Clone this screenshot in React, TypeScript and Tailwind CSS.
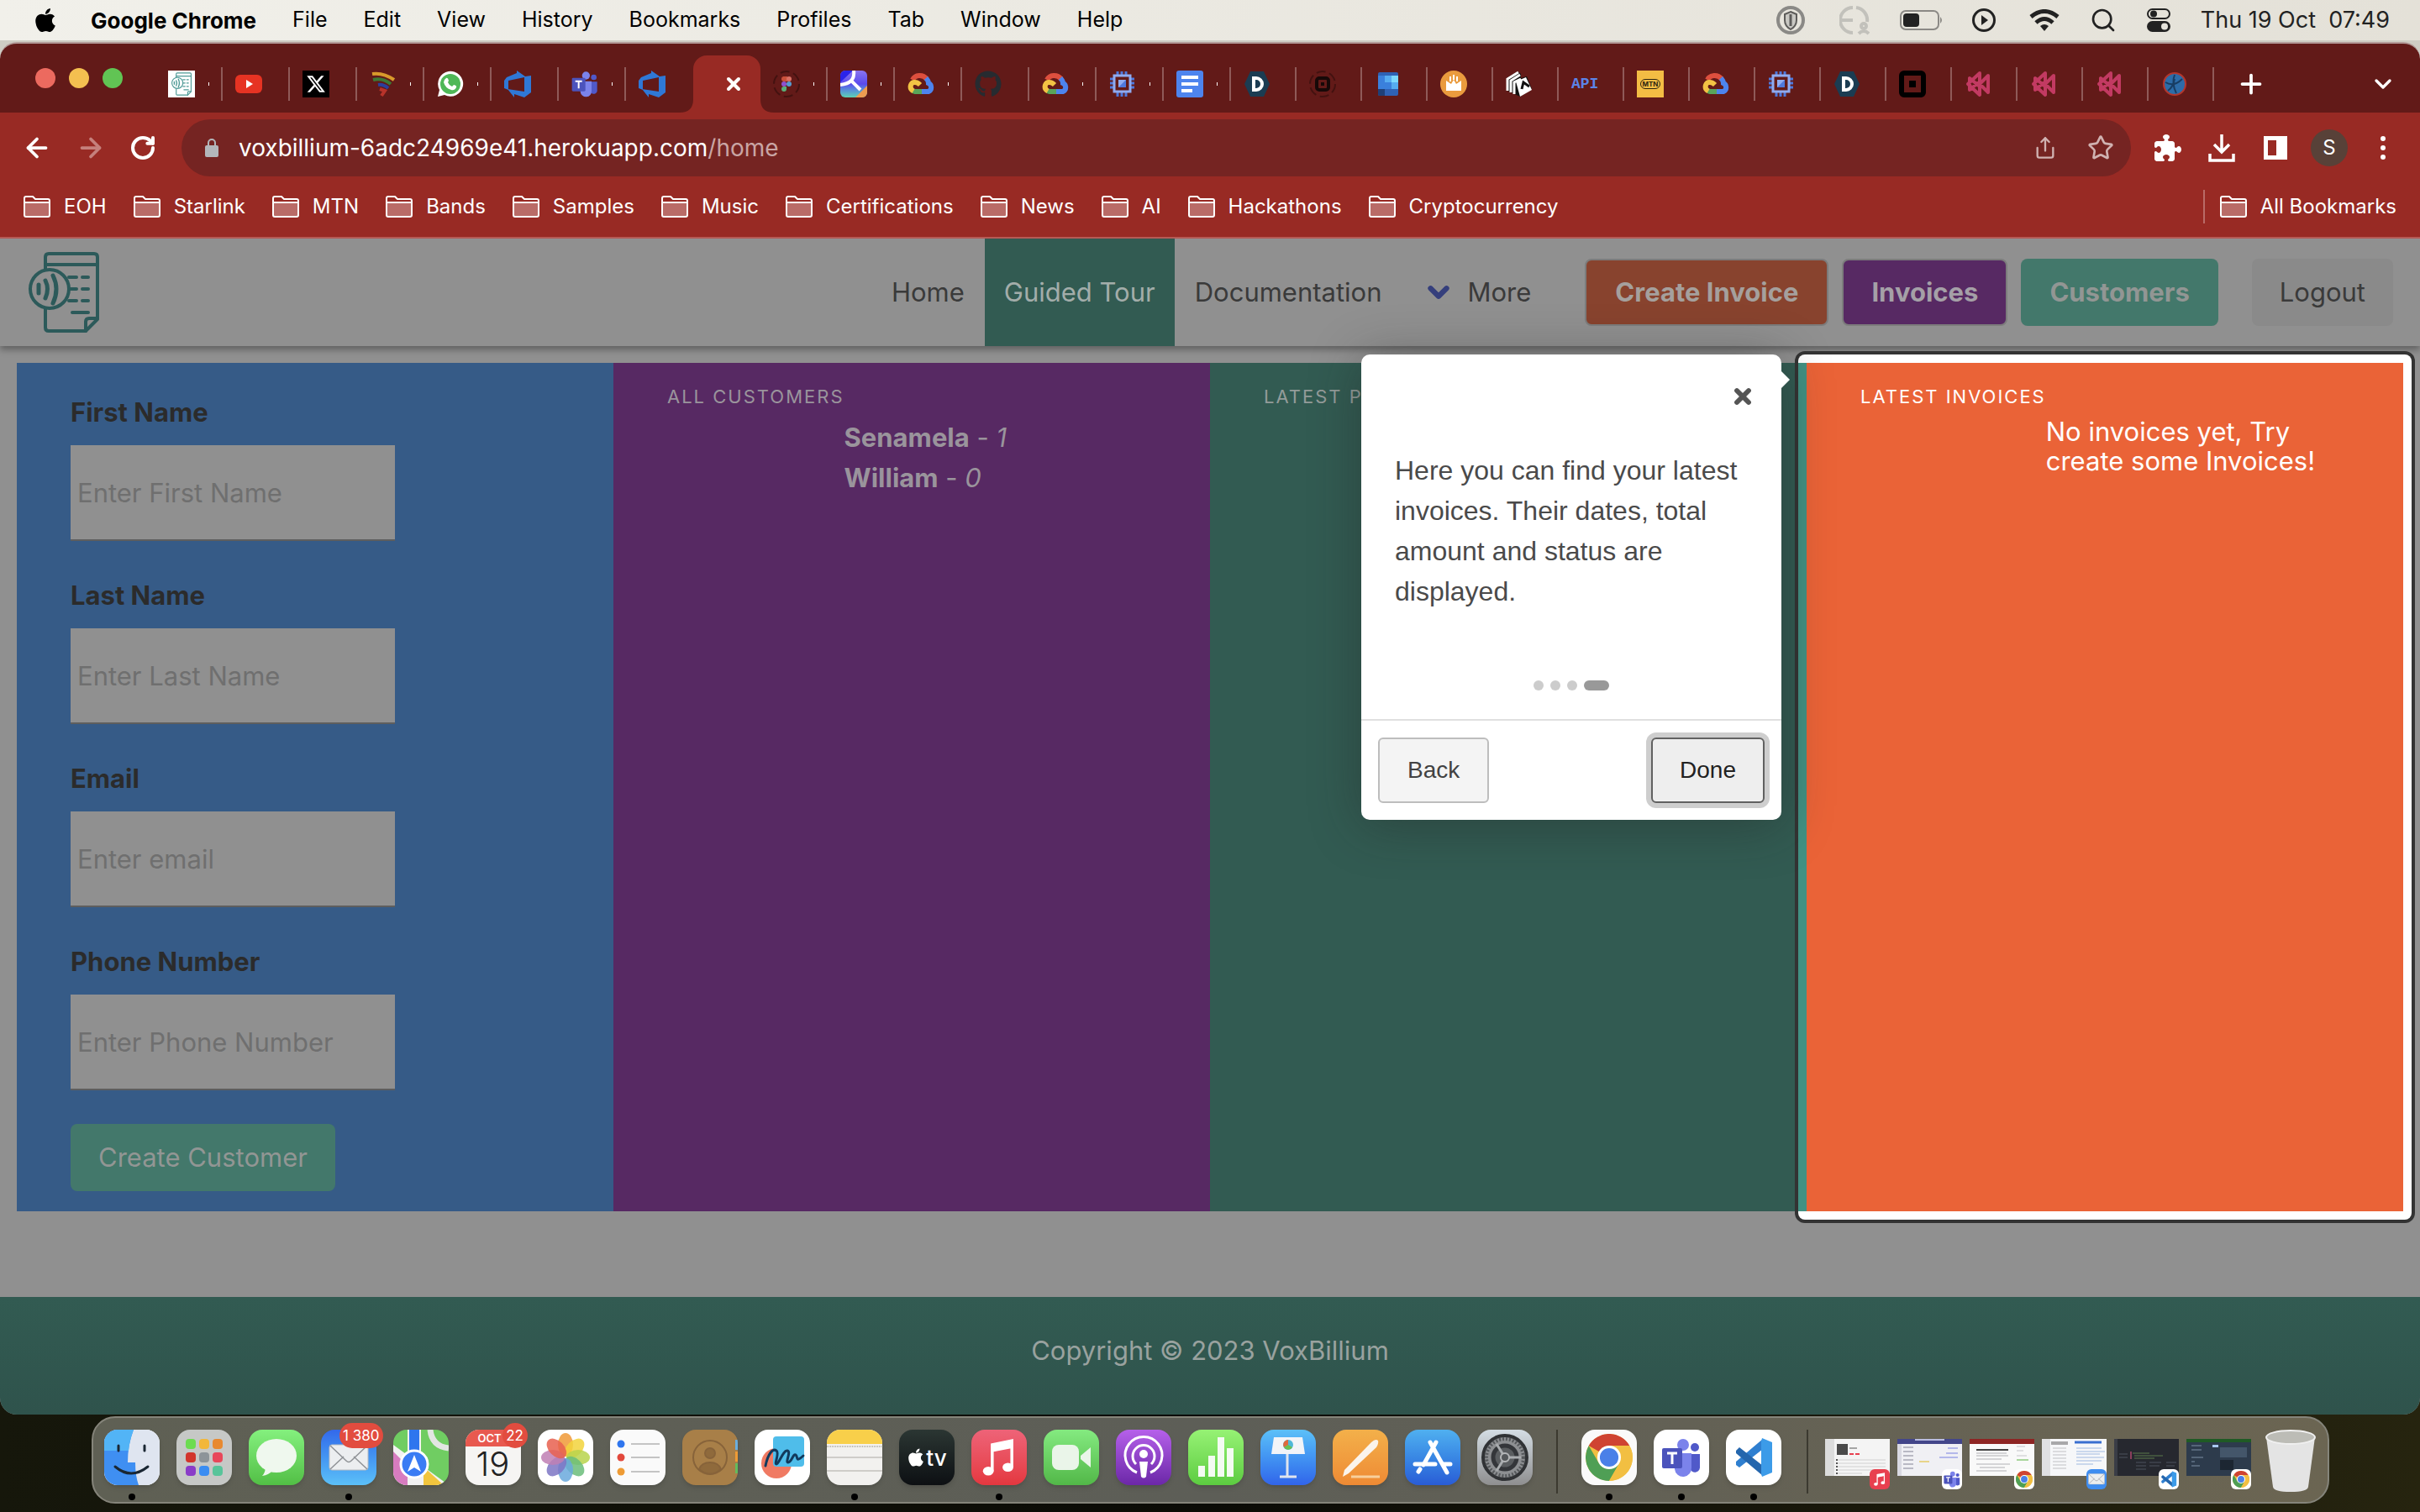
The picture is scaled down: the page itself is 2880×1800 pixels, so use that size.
import type { ReactNode } from 'react';
import clsx from 'clsx';
import { FaApple, FaGithub, FaPuzzlePiece, FaXTwitter } from 'react-icons/fa6';
import {
  ArrowLeft,
  ArrowRight,
  ChevronDown,
  Plus,
  RotateCw,
  Search,
  Share,
  Star,
  X,
} from 'lucide-react';

const menus = ['File', 'Edit', 'View', 'History', 'Bookmarks', 'Profiles', 'Tab', 'Window', 'Help'];

const bookmarks = [
  'EOH',
  'Starlink',
  'MTN',
  'Bands',
  'Samples',
  'Music',
  'Certifications',
  'News',
  'AI',
  'Hackathons',
  'Cryptocurrency',
];

const fields = [
  { id: 'firstName', label: 'First Name', placeholder: 'Enter First Name', type: 'text' },
  { id: 'lastName', label: 'Last Name', placeholder: 'Enter Last Name', type: 'text' },
  { id: 'email', label: 'Email', placeholder: 'Enter email', type: 'email' },
  { id: 'phone', label: 'Phone Number', placeholder: 'Enter Phone Number', type: 'tel' },
];

/* ---------- shared drawings ---------- */

function VoxLogo({ className, stroke }: { className: string; stroke: string }) {
  return (
    <svg viewBox="0 0 84 96" className={className} fill="none" stroke={stroke} strokeWidth="4" strokeLinecap="round" strokeLinejoin="round">
      <path d="M20 20V6q0-4 4-4h54q4 0 4 4v74L68 94H24q-4 0-4-4V68" />
      <path d="M20 15h62" />
      <path d="M82 79H72q-4 0-4 4v11" />
      <circle cx="25" cy="44" r="23" />
      <path d="M12 39v10" strokeWidth="5" />
      <path d="M20 34q5 10 0 21M29 28q8 16 0 33" strokeWidth="5" />
      <path d="M48 30h9M64 30h7M50 44h7M64 44h7M48 58h9M64 58h7M52 72h19" />
    </svg>
  );
}

function CloudLogo() {
  return (
    <svg viewBox="0 0 32 32" className="size-8" fill="none" strokeWidth="6">
      <path d="M6 11C9 5 18 4 23 10" stroke="#dd4f3e" />
      <path d="M22 9q3 3 3 6a5.500 5.500 0 0 1 0 10h-9" stroke="#4d84ee" />
      <path d="M17 25H9l-3-1" stroke="#59a55a" />
      <path d="M7 24.500C1 21 4 13 9 14q3 0 6 3" stroke="#f3c344" />
    </svg>
  );
}

function ChipLogo() {
  return (
    <svg viewBox="0 0 32 32" className="size-8" fill="none">
      <path d="M10 1v5M15 1v5M20 1v5M10 26v5M15 26v5M20 26v5M1 10h5M1 15h5M1 20h5M25 10h5M25 15h5M25 20h5" stroke="#4f78dc" strokeWidth="3" />
      <rect x="6" y="6" width="19" height="19" stroke="#8fabf0" strokeWidth="3" />
      <path d="M11 11h9v9h-9z" fill="#8fabf0" />
      <path d="M20 11v9h-9z" fill="#4f78dc" />
    </svg>
  );
}

function DevOpsLogo() {
  return (
    <svg viewBox="0 0 32 32" className="size-8" fill="#2f78d6">
      <path d="M0 12 3 8l12-5V0l10 7 7-1v20l-8 6-12-4v4L4 22l20 3V8L5 12v11l-5-2z" />
    </svg>
  );
}

function TeamsMark({ className }: { className: string }) {
  return (
    <svg viewBox="0 0 48 48" className={className}>
      <circle cx="26" cy="9" r="7" fill="#7b83eb" />
      <circle cx="40" cy="12" r="5" fill="#5059c9" />
      <path d="M34 20h12v14a6 6 0 0 1-12 3z" fill="#5059c9" />
      <path d="M16 19h20v17a10 10 0 0 1-20 2z" fill="#7b83eb" />
      <rect x="1" y="13" width="24" height="24" rx="2" fill="#4b53bc" />
      <path d="M7 19h12M13 19v13" stroke="#fff" strokeWidth="3" />
    </svg>
  );
}

function CodeMark({ className }: { className: string }) {
  return (
    <svg viewBox="0 0 48 48" className={className}>
      <path d="M35 2 3 29v4l4 3 28-22z" fill="#2f7fd0" />
      <path d="M3 16l4-4 28 22v12L3 19z" fill="#2466ad" />
      <path d="M34 1l12 5v36l-12 5-1-3V5z" fill="#3c9be8" />
    </svg>
  );
}

function ChromeMark({ className }: { className: string }) {
  return (
    <svg viewBox="0 0 48 48" className={className}>
      <circle cx="24" cy="24" r="24" fill="#f2bf42" />
      <path d="M24 24 3.200 12A24 24 0 0 1 44.800 12L24 12z" fill="#cf4332" />
      <path d="M3.200 12A24 24 0 0 0 24 48L34.400 30 24 24 13.600 30z" fill="#4f9f55" />
      <path d="M24 12h20.800A24 24 0 0 1 24 48l10.400-18z" fill="#f2bf42" />
      <circle cx="24" cy="24" r="12" fill="#fff" />
      <circle cx="24" cy="24" r="9.500" fill="#4a80e8" />
    </svg>
  );
}

function MusicMark({ className }: { className: string }) {
  return (
    <svg viewBox="0 0 48 48" className={className}>
      <path d="M17 38V11l20-4v27M17 17l20-4" fill="none" stroke="#fff" strokeWidth="3" />
      <path d="M17 11l20-4v7l-20 4z" fill="#fff" />
      <ellipse cx="13" cy="38" rx="5.500" ry="4.500" fill="#fff" />
      <ellipse cx="33" cy="34" rx="5.500" ry="4.500" fill="#fff" />
    </svg>
  );
}

function Envelope({ className }: { className: string }) {
  return (
    <svg viewBox="0 0 48 32" className={className}>
      <rect x="1" y="1" width="46" height="30" rx="3" fill="#eceef0" stroke="#b9bcc0" />
      <path d="M2 30 18 15M46 30 30 15M2 2l19 18q3 3 6 0L46 2" fill="none" stroke="#8f9296" strokeWidth="1.500" />
    </svg>
  );
}

/* ---------- tab strip ---------- */

function HexD() {
  return (
    <svg viewBox="0 0 32 32" className="size-8">
      <path d="M8 1h16l7 15-7 15H8L1 16z" fill="#1b3c52" />
      <path d="M12 9h3a7 7 0 0 1 0 14h-3z" fill="none" stroke="#fff" strokeWidth="4" />
    </svg>
  );
}

function PinkMark() {
  return (
    <svg viewBox="0 0 32 32" className="size-8" fill="none" stroke="#c23a62" strokeWidth="4" strokeLinejoin="round">
      <path d="M18 3 4 16l14 13V19L6 9v14l12-10zM18 16 28 6v20z" />
    </svg>
  );
}

function DashedRing({ children }: { children: ReactNode }) {
  return (
    <svg viewBox="0 0 32 32" className="size-8">
      <circle cx="16" cy="16" r="15" fill="none" stroke="#431210" strokeWidth="2" strokeDasharray="11 4.700" />
      {children}
    </svg>
  );
}

const firstTabs: ReactNode[] = [
  <div className="flex size-8 items-center justify-center bg-white">
    <VoxLogo className="h-7 w-6" stroke="#4f9a96" />
  </div>,
  <svg viewBox="0 0 32 32" className="size-8">
    <rect y="5" width="32" height="22" rx="6" fill="#e63323" />
    <path d="M13 11v10l8-5z" fill="#fff" />
  </svg>,
  <div className="flex size-8 items-center justify-center bg-black">
    <FaXTwitter className="size-6 text-white" />
  </div>,
  <svg viewBox="0 0 32 32" className="size-8" fill="none" strokeWidth="4">
    <path d="M3 4q13-2 26 7" stroke="#d99a2b" />
    <path d="M4 11q11-3 21 5" stroke="#3c7a35" />
    <path d="M10 17q6-1 12 4" stroke="#2b3f9c" />
    <path d="M12 22l6 2-4 6" stroke="#b8332a" />
  </svg>,
  <svg viewBox="0 0 32 32" className="size-8">
    <path d="M1 31l2-8a15 15 0 1 1 6 6z" fill="#fff" />
    <circle cx="16" cy="16" r="12" fill="#4fb857" />
    <path d="M11 9q2-1 3 3l-1 2q1 3 5 5l2-2q4 1 3 3-2 4-6 3-7-2-9-9 0-3 3-5z" fill="#fff" />
  </svg>,
  <DevOpsLogo />,
  <TeamsMark className="size-8" />,
  <DevOpsLogo />,
];

const middleTabs: ReactNode[] = [
  <DashedRing>
    <rect x="10" y="7" width="6" height="6" rx="3" fill="#c9503a" />
    <rect x="12" y="7" width="5" height="6" fill="#c9503a" />
    <rect x="16" y="7" width="6" height="6" rx="3" fill="#d96f63" />
    <circle cx="13" cy="16" r="3" fill="#8e52cf" />
    <circle cx="19" cy="16" r="3" fill="#569bcf" />
    <path d="M13 19h3v3a3 3 0 1 1-3-3z" fill="#5aae78" />
  </DashedRing>,
  <div className="overflow-hidden rounded-md bg-linear-to-t from-[#5fd0b0] via-[#5a48ee] to-[#8a74ee]">
    <svg viewBox="0 0 32 32" className="size-8" fill="none">
      <path d="M18 32l14-14v14z" fill="#ee9b50" />
      <path d="M0 0h15L0 14z" fill="#2a24ea" />
      <path d="M16 0q1 8-3 12T0 17M13 12l11 11" stroke="#fff" strokeWidth="4" />
    </svg>
  </div>,
  <CloudLogo />,
  <FaGithub className="size-8 text-[#272b30]" />,
  <CloudLogo />,
  <ChipLogo />,
  <svg viewBox="0 0 32 32" className="size-8">
    <rect width="32" height="32" rx="3" fill="#4d84ee" />
    <path d="M6 8h20M6 16h20M6 24h13" stroke="#fff" strokeWidth="4" />
  </svg>,
];

const lastTabs: ReactNode[] = [
  <HexD />,
  <DashedRing>
    <rect x="9" y="9" width="14" height="14" rx="3" fill="none" stroke="#170908" strokeWidth="4" />
    <path d="M14 14h4v4h-4z" fill="#170908" />
  </DashedRing>,
  <svg viewBox="0 0 32 32" className="size-8">
    <rect x="4" y="2" width="24" height="28" rx="2" fill="#2f62b4" />
    <path d="M4 6h8v16H4zM12 14h8v8h-8z" fill="#3a80dc" />
    <path d="M12 6h8v8h-8zM20 14h8v8h-8z" fill="#56acf0" />
    <path d="M20 6h8v8h-8z" fill="#7cd8fc" />
    <path d="M4 22h8v8H6q-2 0-2-2z" fill="#1f4078" />
  </svg>,
  <svg viewBox="0 0 32 32" className="size-8">
    <circle cx="16" cy="16" r="16" fill="#ea9b3e" />
    <path d="M7 12l6 4 3-5 3 5 6-4v12H7z" fill="#fff" />
    <path d="M12 7v6M16 5v6M20 7v6" stroke="#fff" strokeWidth="2" />
  </svg>,
  <svg viewBox="0 0 32 32" className="size-8">
    <path d="M1 9 14 1l4 3v5l7-2 6 15-14 9L2 24z" fill="#111" />
    <path d="M2 24V10l13-8M6 26V12l11-7M10 28V14l8-4" fill="none" stroke="#fff" strokeWidth="3" />
    <path d="M12 13l12-5 7 15-14 8z" fill="#fff" />
    <path d="M19 22l2-8 7 5" fill="none" stroke="#111" strokeWidth="3" />
  </svg>,
  <span className="w-8 text-center font-['Liberation_Mono',monospace] text-lg font-bold text-[#5b84e8]">API</span>,
  <div className="flex size-8 items-center justify-center bg-[#f3bd44]">
    <div className="flex h-3 w-6 items-center justify-center rounded-full border border-[#2c2410]">
      <span className="text-[8px] font-bold leading-none text-[#2c2410]">MTN</span>
    </div>
  </div>,
  <CloudLogo />,
  <ChipLogo />,
  <HexD />,
  <div className="flex size-8 items-center justify-center rounded-md border-[6px] border-black">
    <div className="size-2 bg-black" />
  </div>,
  <PinkMark />,
  <PinkMark />,
  <PinkMark />,
  <svg viewBox="0 0 32 32" className="size-8">
    <circle cx="16" cy="16" r="13" fill="#2d6ca8" stroke="#b3362c" strokeWidth="2" />
    <path d="M16 5q-4 10 2 22M5 14q10 6 20-4M8 24q6-4 8-14" stroke="#183d63" strokeWidth="2" fill="none" />
  </svg>,
];

function BrowserTab({ children, width, last, clipped }: { children: ReactNode; width: string; last?: boolean; clipped?: boolean }) {
  return (
    <button className={clsx('flex h-10 shrink-0 items-center pl-[15px]', width, !last && 'border-r-2 border-[#8f5a58]')}>
      {children}
      {clipped && <span className="ml-4 h-1 w-px bg-white" />}
    </button>
  );
}

function TabStrip() {
  return (
    <div className="flex h-[84px] items-end rounded-t-[20px] border-t-2 border-[#b39a98] bg-[#621a18]">
      <div className="flex h-[82px] w-[185px] shrink-0 items-center gap-4 pl-[42px]">
        <span className="size-6 rounded-full bg-[#ec6a5f]" />
        <span className="size-6 rounded-full bg-[#f4bf50]" />
        <span className="size-6 rounded-full bg-[#61c454]" />
      </div>
      <div className="flex h-[68px] items-center">
        {firstTabs.map((icon, i) => (
          <BrowserTab key={i} width="w-20" last={i === firstTabs.length - 1} clipped={[0, 3, 4, 6].includes(i)}>
            {icon}
          </BrowserTab>
        ))}
        <div className="relative flex h-full w-20 items-center justify-end rounded-t-2xl bg-[#982a24] pr-5">
          <svg viewBox="0 0 16 16" className="absolute right-full bottom-0 size-4">
            <path d="M16 0v16H0Q16 16 16 0z" fill="#982a24" />
          </svg>
          <svg viewBox="0 0 16 16" className="absolute bottom-0 left-full size-4">
            <path d="M0 0v16h16Q0 16 0 0z" fill="#982a24" />
          </svg>
          <button aria-label="Close tab">
            <X className="size-6 text-white" strokeWidth={4} />
          </button>
        </div>
        {middleTabs.map((icon, i) => (
          <BrowserTab key={i} width="w-20" clipped={i !== 3}>
            {icon}
          </BrowserTab>
        ))}
        {lastTabs.map((icon, i) => (
          <BrowserTab key={i} width="w-[78px]">
            {icon}
          </BrowserTab>
        ))}
        <button aria-label="New tab" className="ml-[26px]">
          <Plus className="size-9 text-white" strokeWidth={2.5} />
        </button>
      </div>
      <button aria-label="Search tabs" className="mr-7 ml-auto flex h-[68px] items-center">
        <ChevronDown className="size-8 text-white" strokeWidth={2.5} />
      </button>
    </div>
  );
}

/* ---------- browser toolbar ---------- */

function Folder() {
  return (
    <svg viewBox="0 0 32 26" className="h-[26px] w-8" fill="none" stroke="#fff" strokeWidth="2" strokeLinejoin="round">
      <path d="M1 8h30v15q0 2-2 2H3q-2 0-2-2z" fill="#b96b67" />
      <path d="M1 8V3q0-2 2-2h8l3 3h15q2 0 2 2v2" />
    </svg>
  );
}

function Toolbar() {
  return (
    <div className="border-b-2 border-[#b55a55] bg-[#982a24] text-white">
      <div className="flex h-[84px] items-center pr-7 pl-[26px]">
        <div className="flex w-[190px] shrink-0 items-center gap-7">
          <button aria-label="Back">
            <ArrowLeft className="size-9" strokeWidth={2.5} />
          </button>
          <button aria-label="Forward">
            <ArrowRight className="size-9 text-[#c5807c]" strokeWidth={2.5} />
          </button>
          <button aria-label="Reload">
            <RotateCw className="size-8" strokeWidth={3} />
          </button>
        </div>
        <div className="flex h-[68px] flex-1 items-center rounded-full bg-[#752422] pr-5 pl-7">
          <svg viewBox="0 0 16 22" className="h-[22px] w-4">
            <path d="M4 9V5a4 4 0 0 1 8 0v4" fill="none" stroke="#b3b6ba" strokeWidth="2" />
            <rect y="8" width="16" height="14" rx="2" fill="#b3b6ba" />
          </svg>
          <span className="ml-6 text-[28px]">
            voxbillium-6adc24969e41.herokuapp.com<span className="text-[#c9a5a4]">/home</span>
          </span>
          <button aria-label="Share" className="ml-auto">
            <Share className="size-7 text-[#d0b2b1]" />
          </button>
          <button aria-label="Bookmark this tab" className="ml-9">
            <Star className="size-8 text-[#d0b2b1]" />
          </button>
        </div>
        <div className="flex items-center gap-8 pl-7">
          <FaPuzzlePiece className="size-8" />
          <svg viewBox="0 0 32 34" className="h-[34px] w-8" fill="none" stroke="#fff" strokeWidth="3.500">
            <path d="M16 1v20M7 13l9 9 9-9M2 24v8h28v-8" />
          </svg>
          <svg viewBox="0 0 32 32" className="size-8">
            <path d="M2 2h28v28H2zM7 7v18h10V7z" fill="#fff" fillRule="evenodd" />
          </svg>
          <span className="-mx-1.5 flex size-11 items-center justify-center rounded-full bg-[#584138] text-2xl">S</span>
          <svg viewBox="0 0 32 32" className="size-8" fill="#fff">
            <circle cx="16" cy="5" r="3" />
            <circle cx="16" cy="16" r="3" />
            <circle cx="16" cy="27" r="3" />
          </svg>
        </div>
      </div>
      <div className="flex h-16 items-start pt-2 pr-7 pl-7 text-[24px]">
        <div className="flex h-10 items-center gap-8">
          {bookmarks.map((name) => (
            <button key={name} className="flex items-center gap-4">
              <Folder />
              {name}
            </button>
          ))}
        </div>
        <button className="ml-auto flex h-10 items-center gap-4 border-l-2 border-[#b96b67] pl-[18px]">
          <Folder />
          All Bookmarks
        </button>
      </div>
    </div>
  );
}

/* ---------- menu bar ---------- */

function MenuBar() {
  return (
    <div className="flex h-12 items-center bg-linear-to-r from-[#f1f0ea] to-[#e4e1d8] pr-9 pl-[38px] text-[25px] text-black">
      <FaApple className="size-8" />
      <nav className="ml-[38px] flex items-center gap-[43px]">
        <span className="text-[26px] font-bold">Google Chrome</span>
        {menus.map((name) => (
          <button key={name}>{name}</button>
        ))}
      </nav>
      <div className="ml-auto flex items-center text-[#222]">
        <svg viewBox="0 0 36 36" className="size-9" fill="none">
          <circle cx="18" cy="18" r="15" stroke="#8a8986" strokeWidth="4" />
          <path d="M18 8l7 3v7q0 7-7 11-7-4-7-11v-7z" fill="#c9c8c3" stroke="#5d5c5a" strokeWidth="2" />
          <path d="M18 11v14" stroke="#5d5c5a" strokeWidth="3" />
        </svg>
        <svg viewBox="0 0 36 36" className="ml-10 size-9" fill="none" stroke="#c2c1bb" strokeWidth="4">
          <path d="M16 3a15 15 0 0 0 0 30M20 3a15 15 0 0 1 13 17M2 18h14" />
          <circle cx="29" cy="25" r="3" />
          <path d="M23 34q6-6 12 0" />
        </svg>
        <svg viewBox="0 0 52 24" className="ml-9 h-6 w-[52px]">
          <rect x="1" y="1" width="45" height="22" rx="6" fill="none" stroke="#8b8985" strokeWidth="2" />
          <rect x="4" y="4" width="19" height="16" rx="4" fill="#222" />
          <path d="M48 8q4 4 0 8z" fill="#8b8985" />
        </svg>
        <svg viewBox="0 0 28 28" className="ml-[34px] size-7">
          <circle cx="14" cy="14" r="12.500" fill="none" stroke="#222" strokeWidth="3" />
          <path d="M11 8v12l8-6z" fill="#222" />
        </svg>
        <svg viewBox="0 0 36 26" className="ml-10 h-[26px] w-9" fill="none" stroke="#222" strokeWidth="5">
          <path d="M2 9q16-13 32 0" />
          <path d="M8 16q10-9 20 0" />
          <path d="M13 20q5-4 10 0l-5 6z" fill="#222" stroke="none" />
        </svg>
        <Search className="ml-9 size-8" />
        <svg viewBox="0 0 28 28" className="ml-9 size-7">
          <rect x="1" y="1" width="26" height="11" rx="5.500" fill="none" stroke="#222" strokeWidth="2" />
          <circle cx="8" cy="6.500" r="4" fill="#222" />
          <rect y="15" width="28" height="13" rx="6.500" fill="#222" />
          <circle cx="21" cy="21.500" r="4" fill="#e5e3db" />
        </svg>
        <time className="ml-9 text-[27px] whitespace-pre">Thu 19 Oct  07:49</time>
      </div>
    </div>
  );
}

/* ---------- web page ---------- */

function Navbar() {
  return (
    <header className="relative flex h-32 items-stretch bg-[#909090] px-8 text-[31px] text-[#3a3a3a] shadow-[0_4px_8px_rgba(0,0,0,0.35)]">
      <a href="#home" aria-label="VoxBillium" className="flex items-center">
        <VoxLogo className="h-24 w-[88px]" stroke="#2c5a5a" />
      </a>
      <nav className="ml-auto flex items-stretch">
        <a href="#home" className="flex items-center px-6">Home</a>
        <a href="#tour" className="flex items-center bg-[#325b52] px-[23px] text-[#a3adaa]">Guided Tour</a>
        <a href="#docs" className="flex items-center px-6">Documentation</a>
        <button className="flex items-center gap-4 pr-16 pl-6">
          <ChevronDown className="size-[38px] text-[#353f7c]" strokeWidth={4} />
          More
        </button>
      </nav>
      <div className="flex items-center">
        <button className="mr-4 h-20 rounded-lg border-2 border-[#7c7c7c] bg-[#88432e] px-[34px] font-bold text-[#a5a09d]">
          Create Invoice
        </button>
        <button className="mr-4 h-20 rounded-lg border-2 border-[#7c7c7c] bg-[#572963] px-[33px] font-bold text-[#a5a0a7]">
          Invoices
        </button>
        <button className="mr-10 h-20 rounded-lg bg-[#43786b] px-[34px] font-bold text-[#929694]">Customers</button>
        <button className="h-20 rounded-lg bg-[#8a8a8a] px-[33px]">Logout</button>
      </div>
    </header>
  );
}

function Heading({ children }: { children: ReactNode }) {
  return <h2 className="text-[22px] leading-7 tracking-[2px] uppercase">{children}</h2>;
}

function CustomerForm() {
  return (
    <form className="bg-[#365b87] px-16 pt-9 pb-6" onSubmit={(e) => e.preventDefault()}>
      {fields.map((f) => (
        <div key={f.id} className="mb-[42px] last-of-type:mb-10">
          <label htmlFor={f.id} className="block h-[62px] text-[31px] leading-[46px] font-bold text-[#2b2b2b]">
            {f.label}
          </label>
          <input
            id={f.id}
            type={f.type}
            placeholder={f.placeholder}
            className="block h-[114px] w-[386px] border-b-2 border-[#5e5e5e] bg-[#909090] px-2 placeholder:text-[#6f6f6f]"
          />
        </div>
      ))}
      <button type="submit" className="block h-20 rounded-lg bg-[#43786b] px-[33px] text-[#929694]">
        Create Customer
      </button>
    </form>
  );
}

function TourPopover() {
  return (
    <div
      role="dialog"
      aria-label="Guided tour"
      className="absolute -top-[10px] right-full z-20 mr-[30px] w-[500px] rounded-[10px] bg-white font-['Liberation_Sans',Helvetica,sans-serif] text-[#4a4a4a] shadow-[0_6px_60px_rgba(33,33,33,0.4)]"
    >
      <span className="absolute top-5 left-full border-y-10 border-l-10 border-y-transparent border-l-white" />
      <div className="flex h-[110px] justify-end pt-9 pr-8">
        <button aria-label="Close" className="size-7">
          <X className="size-7 text-[#555]" strokeWidth={5} />
        </button>
      </div>
      <p className="px-10 pt-1 text-[32px] leading-[48px]">
        Here you can find your latest invoices. Their dates, total amount and status are displayed.
      </p>
      <div className="mt-[82px] flex justify-center gap-2">
        <span className="size-3 rounded-full bg-[#ccc]" />
        <span className="size-3 rounded-full bg-[#ccc]" />
        <span className="size-3 rounded-full bg-[#ccc]" />
        <span className="h-3 w-[30px] rounded-full bg-[#999]" />
      </div>
      <div className="mt-[34px] flex justify-between border-t-2 border-[#e0e0e0] p-5 text-[28px] text-[#424242]">
        <button className="h-[78px] rounded-md border-2 border-[#bdbdbd] bg-[#f4f4f4] px-[33px]">Back</button>
        <button className="h-[78px] rounded-md border-2 border-[#616161] bg-[#eee] px-8 text-[#212121] ring-[6px] ring-[#cecece]">
          Done
        </button>
      </div>
    </div>
  );
}

function Page() {
  return (
    <div className="flex flex-1 flex-col overflow-hidden rounded-b-[20px] bg-[#909090] text-[31px]">
      <Navbar />
      <main className="grid grid-cols-4 p-5 pb-[102px]">
        <CustomerForm />
        <section className="bg-[#572963] px-16 pt-[26px] text-[#9a949c]">
          <div className="grid grid-cols-[auto_1fr]">
            <Heading>All Customers</Heading>
            <ul className="col-start-2 row-start-2 pt-[11px] leading-[48px]">
              <li>
                <strong className="font-bold">Senamela</strong> - <em>1</em>
              </li>
              <li>
                <strong className="font-bold">William</strong> - <em>0</em>
              </li>
            </ul>
          </div>
        </section>
        <section className="bg-[#325b52] px-16 pt-[26px] text-[#949c9a]">
          <Heading>Latest P</Heading>
        </section>
        <section className="relative">
          {/* подсветка активного шага */}
          <div className="absolute -inset-x-[10px] -top-[10px] -bottom-[10px] flex rounded-lg bg-white ring-4 ring-[#333]">
            <div className="my-[10px] w-[10px] bg-[#429183]" />
          </div>
          <div className="relative h-full bg-[#ea6337] px-16 pt-[26px] text-white">
            <div className="grid grid-cols-[auto_1fr]">
              <Heading>Latest Invoices</Heading>
              <p className="col-start-2 row-start-2 pt-[10px] leading-[35px]">
                No invoices yet, Try
                <br />
                create some Invoices!
              </p>
            </div>
          </div>
          <TourPopover />
        </section>
      </main>
      <footer className="flex flex-1 items-center justify-center bg-linear-to-b from-[#325b52] to-[#2f534c] pb-3 text-[#99a29f]">
        Copyright © 2023 VoxBillium
      </footer>
    </div>
  );
}

/* ---------- dock ---------- */

function DockIcon({ className, running, children }: { className: string; running?: boolean; children?: ReactNode }) {
  return (
    <button className="relative flex flex-col items-center">
      <span className={clsx('flex size-[66px] items-center justify-center overflow-hidden rounded-2xl shadow-md', className)}>
        {children}
      </span>
      <span className={clsx('mt-[10px] size-2 rounded-full', running && 'bg-black')} />
    </button>
  );
}

function Badge({ children }: { children: ReactNode }) {
  return (
    <span className="absolute -top-2 -right-2 min-w-[30px] rounded-full bg-[#e24c3f] px-1 text-center text-[17px] leading-[30px] whitespace-nowrap text-white">
      {children}
    </span>
  );
}

const launchpad = [
  'bg-[#6cdc50]', 'bg-[#f2b73a]', 'bg-[#e8892f]',
  'bg-[#d2352b]', 'bg-[#8d9499]', 'bg-[#e8475a]',
  'bg-[#8a3cc8]', 'bg-[#3a8df2]', 'bg-[#58c49a]',
];

const petals = ['#f09a37', '#f2d33c', '#b8d44c', '#6bbd7a', '#6aa9dd', '#7d76c4', '#c07fb4', '#e8604f'];

function MiniIcon({ className, children }: { className: string; children: ReactNode }) {
  return <span className={clsx('flex size-6 items-center justify-center rounded-md', className)}>{children}</span>;
}

const windows = [
  {
    screen: 'bg-[#f4f4f4]',
    drawing: (
      <>
        <path d="M0 0h11v44H0z" fill="#dcdcdc" />
        <rect x="14" y="6" width="13" height="13" fill="#4a4a4a" />
        <path d="M29 11h9" stroke="#555" />
        <path d="M29 18h5M36 18h5" stroke="#e8404f" strokeWidth="2" />
        <path d="M14 25h58M14 29h58M14 33h58M14 37h58M14 41h30" stroke="#d0d0d0" />
        <path d="M14 24v18" stroke="#555" strokeWidth="2" strokeDasharray="2 2" />
      </>
    ),
    badge: <MiniIcon className="bg-[#e8404f]"><MusicMark className="size-5" /></MiniIcon>,
  },
  {
    screen: 'bg-[#f0f0f4]',
    drawing: (
      <>
        <path d="M0 0h77v6H0z" fill="#43468a" />
        <path d="M21 1h35" stroke="#b8bbe0" strokeWidth="2" />
        <path d="M0 6h5v38H0z" fill="#d9d9e2" />
        <path d="M7 10h12M7 15h12M7 20h12M7 25h12M7 30h12M7 35h12" stroke="#b9b9c4" strokeWidth="2" />
        <path d="M60 11h12M58 17h14M50 22h22" stroke="#b4b8ea" strokeWidth="2" />
        <path d="M26 27h12" stroke="#e8d48a" strokeWidth="2" />
      </>
    ),
    badge: <MiniIcon className="bg-white"><TeamsMark className="size-5" /></MiniIcon>,
  },
  {
    screen: 'bg-[#f9f9f9]',
    drawing: (
      <>
        <path d="M0 0h77v6H0z" fill="#8e2523" />
        <path d="M8 13h38" stroke="#444" strokeWidth="2" />
        <path d="M8 17h36M8 20h38M8 24h30M8 30h40M12 34h30M8 38h36" stroke="#b0b0b4" />
        <path d="M56 9h10M56 14h8M56 20h12" stroke="#c4c4c8" />
        <path d="M56 25h14" stroke="#a8d69c" strokeWidth="2" />
      </>
    ),
    badge: <MiniIcon className="bg-white"><ChromeMark className="size-5" /></MiniIcon>,
  },
  {
    screen: 'bg-[#f6f7f9]',
    drawing: (
      <>
        <path d="M0 0h10v44H0z" fill="#e0e0e2" />
        <path d="M11 3h20v4H11z" fill="#a8a8aa" />
        <path d="M39 4h32" stroke="#3a6fd0" strokeWidth="3" />
        <path d="M13 11h16M13 15h16M13 19h16M13 23h16M13 27h16M13 31h16M13 35h16" stroke="#c0c0c4" />
        <path d="M41 11h30M41 15h34M41 18h28M41 22h33M41 26h30M41 30h20" stroke="#9fb8e0" />
      </>
    ),
    badge: <MiniIcon className="bg-[#3f8df0]"><Envelope className="w-5" /></MiniIcon>,
  },
  {
    screen: 'bg-[#26282f]',
    drawing: (
      <>
        <path d="M0 0h4v44H0z" fill="#3a3d46" />
        <path d="M22 17h20M24 20h34M24 23h24" stroke="#5a7a4c" />
        <path d="M20 15v9" stroke="#8a3f5c" strokeWidth="2" />
        <path d="M6 18h10M6 22h10M26 28h12M42 28h14M26 32h12M42 32h12M26 36h12M62 28h12M62 32h10" stroke="#4d525e" />
      </>
    ),
    badge: <MiniIcon className="bg-white"><CodeMark className="size-5" /></MiniIcon>,
  },
  {
    screen: 'bg-[#2d3b4c]',
    drawing: (
      <>
        <path d="M0 0h77v4H0z" fill="#1f5a24" />
        <rect x="31" y="7" width="7" height="3" fill="#a9c8f0" />
        <path d="M40 10h32v12H40z" fill="#44566a" />
        <path d="M40 25h16v12H40z" fill="#1c2632" />
        <path d="M6 8h12M6 13h12M6 22h14M6 27h4M6 32h10" stroke="#7f90a4" />
      </>
    ),
    badge: <MiniIcon className="bg-white"><ChromeMark className="size-5" /></MiniIcon>,
  },
];

function Dock() {
  return (
    <div className="flex justify-center pt-[2px] pb-[10px]">
      <div className="flex h-[104px] items-start gap-5 rounded-[28px] border-2 border-[#85847a] bg-linear-to-r from-[#5f6054] via-[#5d5e57] to-[#6b6552] px-[13px] pt-[14px]">
        <DockIcon className="bg-white" running>
          <svg viewBox="0 0 66 66" className="size-[66px]">
            <path d="M0 0h66v66H0z" fill="#dfe5f0" />
            <path d="M0 0h35q-7 18-7 39h9q0 16 4 27H0z" fill="#3f8ff2" />
            <path d="M0 0h35q-5 13-6 25H0z" fill="#52b4f6" />
            <path d="M17 19v6M48 19v6" stroke="#1a2733" strokeWidth="3" strokeLinecap="round" />
            <path d="M13 44q19 16 39 0" fill="none" stroke="#1a2733" strokeWidth="3" strokeLinecap="round" />
          </svg>
        </DockIcon>
        <DockIcon className="bg-[#c6c8c6]">
          <span className="grid grid-cols-3 gap-1">
            {launchpad.map((c) => (
              <span key={c} className={clsx('size-3 rounded-sm', c)} />
            ))}
          </span>
        </DockIcon>
        <DockIcon className="bg-linear-to-b from-[#84f07e] to-[#52bf45]">
          <svg viewBox="0 0 66 66" className="size-[66px]" fill="#eff8ee">
            <ellipse cx="33" cy="31" rx="24" ry="20" />
            <path d="M20 44q0 7-4 11 8-1 13-7z" />
          </svg>
        </DockIcon>
        <div className="relative">
          <DockIcon className="bg-linear-to-b from-[#3468ea] to-[#5cc0f8]" running>
            <Envelope className="w-12" />
          </DockIcon>
          <Badge>1 380</Badge>
        </div>
        <DockIcon className="bg-[#70cd62]">
          <svg viewBox="0 0 66 66" className="size-[66px]">
            <path d="M0 18 66 66H0z" fill="#f2f2f2" />
            <path d="M0 26l18 18v22H0z" fill="#d77cc0" />
            <path d="M36 66V44l24 22z" fill="#f2c53d" />
            <path d="M17 0h16v66H17z" fill="#f2f2f2" />
            <path d="M19 0h12v34H19z" fill="#2f76ee" />
            <path d="M44 0q2 20 22 22" fill="none" stroke="#e2e6e2" strokeWidth="7" />
            <circle cx="25" cy="41" r="16" fill="#3a7cf4" stroke="#fff" strokeWidth="3" />
            <path d="M25 30l8 20-8-5-8 5z" fill="#fff" />
          </svg>
        </DockIcon>
        <div className="relative">
          <DockIcon className="bg-[#f6f5f3]">
            <span className="flex size-full flex-col items-center">
              <span className="h-5 w-full bg-[#e8594f] pr-2 text-center text-[13px] leading-5 font-semibold text-white">OCT</span>
              <span className="text-[40px] leading-[42px] font-light text-[#222]">19</span>
            </span>
          </DockIcon>
          <Badge>22</Badge>
        </div>
        <DockIcon className="bg-white">
          <svg viewBox="0 0 66 66" className="size-[66px]">
            {petals.map((c, i) => (
              <ellipse key={c} cx="33" cy="18" rx="9" ry="14" fill={c} fillOpacity="0.85" transform={`rotate(${i * 45} 33 33)`} />
            ))}
          </svg>
        </DockIcon>
        <DockIcon className="bg-[#fafafa]">
          <svg viewBox="0 0 66 66" className="size-[66px]">
            <circle cx="13" cy="17" r="4.500" fill="#2f76ee" />
            <circle cx="13" cy="33" r="4.500" fill="#e2483c" />
            <circle cx="13" cy="50" r="4.500" fill="#ee9b35" />
            <path d="M25 17h34M25 33h34M25 50h34" stroke="#c4c4c4" strokeWidth="2" />
          </svg>
        </DockIcon>
        <DockIcon className="bg-[#a87f48]">
          <svg viewBox="0 0 66 66" className="size-[66px]" fill="none" stroke="#87633a" strokeWidth="2">
            <circle cx="33" cy="33" r="20" />
            <circle cx="33" cy="28" r="6" fill="#8f6a3c" />
            <path d="M20 47q3-8 13-8t13 8q-13 11-26 0z" fill="#8f6a3c" />
            <path d="M65 12v12" stroke="#6aaede" strokeWidth="4" />
            <path d="M65 26v12" stroke="#ee9b35" strokeWidth="4" />
            <path d="M65 40v12" stroke="#63bb5c" strokeWidth="4" />
          </svg>
        </DockIcon>
        <DockIcon className="bg-white">
          <svg viewBox="0 0 66 66" className="size-[66px]">
            <circle cx="26" cy="40" r="18" fill="#f07a63" />
            <rect x="22" y="8" width="37" height="36" rx="4" fill="#4fbdea" />
            <path d="M13 43C16 28 22 22 26 25s-3 16 0 16 8-17 13-16-3 14 1 14 6-11 9-9-1 10 9 1" fill="none" stroke="#123a5c" strokeWidth="3" strokeLinecap="round" strokeLinejoin="round" />
          </svg>
        </DockIcon>
        <DockIcon className="bg-[#f2f1ef]" running>
          <svg viewBox="0 0 66 66" className="size-[66px]">
            <path d="M0 0h66v17H0z" fill="#f8cf4a" />
            <path d="M0 20h66" stroke="#b9b7b0" strokeWidth="2" strokeDasharray="1 1" />
            <path d="M0 33h66M0 49h66" stroke="#cfcdc9" strokeWidth="2" />
          </svg>
        </DockIcon>
        <DockIcon className="bg-linear-to-b from-[#2b3633] to-[#0d1013]">
          <span className="flex items-center text-[26px] font-medium text-white">
            <FaApple className="size-6" />
            tv
          </span>
        </DockIcon>
        <DockIcon className="bg-linear-to-b from-[#ee6378] to-[#e4373f]" running>
          <MusicMark className="size-14" />
        </DockIcon>
        <DockIcon className="bg-linear-to-b from-[#84ea80] to-[#52b848]">
          <svg viewBox="0 0 66 66" className="size-[66px]" fill="#eaf5e9">
            <rect x="10" y="18" width="32" height="30" rx="8" />
            <path d="M44 31l12-10v24L44 35z" />
          </svg>
        </DockIcon>
        <DockIcon className="bg-linear-to-b from-[#b660ea] to-[#6c27a8]">
          <svg viewBox="0 0 66 66" className="size-[66px]" fill="none" stroke="#fff" strokeWidth="3">
            <path d="M25 51a22 22 0 1 1 16 0" />
            <path d="M24 41a13 13 0 1 1 18 0" />
            <circle cx="33" cy="29" r="5" fill="#fff" stroke="none" />
            <path d="M28 38h10l-2 18q-3 3-6 0z" fill="#fff" stroke="none" />
          </svg>
        </DockIcon>
        <DockIcon className="bg-linear-to-b from-[#96f274] to-[#5ccc40]">
          <svg viewBox="0 0 66 66" className="size-[66px]" stroke="#f4fbf2" strokeWidth="8">
            <path d="M16 56V43M28 56V31M39 56V9M50 56V22" />
          </svg>
        </DockIcon>
        <DockIcon className="bg-linear-to-b from-[#5cc0f8] to-[#3264ea]">
          <svg viewBox="0 0 66 66" className="size-[66px]">
            <path d="M16 9h34l3 20H13z" fill="#f2f4f8" />
            <path d="M32 29v26M23 56h20" stroke="#dfe4ee" strokeWidth="3" />
            <circle cx="33" cy="18" r="6" fill="#4fb8d8" />
            <path d="M33 18v-6a6 6 0 0 0-5 9z" fill="#e06a3c" />
            <path d="M33 18l5 3a6 6 0 0 1-10 0z" fill="#6cc04f" />
          </svg>
        </DockIcon>
        <DockIcon className="bg-linear-to-b from-[#f3b04a] to-[#ee8a34]">
          <svg viewBox="0 0 66 66" className="size-[66px]">
            <path d="M46 15q5-5 8-2 1 3-2 8L19 52l-7 4 2-8z" fill="#fbf4ec" />
            <path d="M22 56h34" stroke="#f8cf9c" strokeWidth="3" />
          </svg>
        </DockIcon>
        <DockIcon className="bg-linear-to-b from-[#50b0f0] to-[#2a5cd6]">
          <svg viewBox="0 0 66 66" className="size-[66px]" stroke="#fff" strokeWidth="5" strokeLinecap="round">
            <path d="M37 15 22 42M30 15l20 36M12 41h24M46 41h8M18 47l-2 3" />
          </svg>
        </DockIcon>
        <DockIcon className="bg-linear-to-b from-[#d4dde4] to-[#8f8f90]">
          <svg viewBox="0 0 66 66" className="size-[66px]" fill="none">
            <circle cx="33" cy="33" r="26" fill="#8d8f92" stroke="#303235" strokeWidth="4" />
            <circle cx="33" cy="33" r="22" stroke="#55585b" strokeWidth="4" strokeDasharray="2 2" />
            <circle cx="33" cy="33" r="14" fill="#5a5d60" stroke="#34363a" strokeWidth="5" />
            <path d="M33 33h19M33 33 23 17M33 33 23 49" stroke="#a9acaf" strokeWidth="3" />
            <circle cx="33" cy="33" r="5" fill="#55585b" stroke="#b4b6b8" strokeWidth="2" />
          </svg>
        </DockIcon>
        <span className="mx-2 h-[76px] w-[2px] bg-[#3c3a30]" />
        <DockIcon className="bg-[#fafafa]" running>
          <ChromeMark className="size-14" />
        </DockIcon>
        <DockIcon className="bg-white" running>
          <TeamsMark className="size-12" />
        </DockIcon>
        <DockIcon className="bg-white" running>
          <CodeMark className="size-12" />
        </DockIcon>
        <span className="ml-[10px] h-[76px] w-[2px] bg-[#3c3a30]" />
        <div className="flex gap-[9px] pt-[11px]">
          {windows.map((w, i) => (
            <button key={i} aria-label="Minimised window" className={clsx('relative h-11 w-[77px]', w.screen)}>
              <svg viewBox="0 0 77 44" className="h-11 w-[77px]">
                {w.drawing}
              </svg>
              <span className="absolute right-0 -bottom-4">{w.badge}</span>
            </button>
          ))}
        </div>
        <svg viewBox="0 0 62 76" className="-ml-1 h-[76px] w-[62px]">
          <path d="M2 9l8 59q1 6 21 6t21-6l8-59z" fill="#e4e4e4" />
          <ellipse cx="31" cy="9" rx="29" ry="8" fill="#bcbcb6" stroke="#f0f0f0" strokeWidth="2" />
        </svg>
      </div>
    </div>
  );
}

export default function App() {
  return (
    <div className="flex min-h-screen flex-col bg-linear-to-r from-[#16170b] via-[#0b0b06] to-[#26240f] font-[Inter,'Noto_Sans',sans-serif]">
      <MenuBar />
      <div className="bg-[#cfcdc4] pt-[2px]">
        <TabStrip />
      </div>
      <Toolbar />
      <Page />
      <Dock />
    </div>
  );
}
